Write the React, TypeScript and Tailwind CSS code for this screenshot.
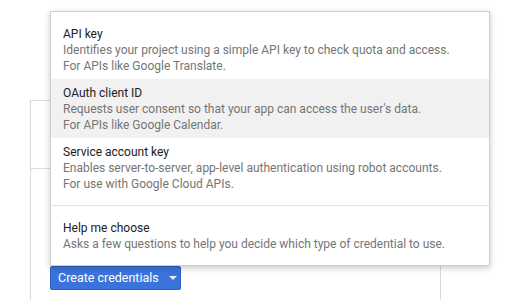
import React from "react";

type Item = { title: string; lines: string[]; active?: boolean };

const mainItems: Item[] = [
  {
    title: "API key",
    lines: [
      "Identifies your project using a simple API key to check quota and access.",
      "For APIs like Google Translate.",
    ],
  },
  {
    title: "OAuth client ID",
    lines: [
      "Requests user consent so that your app can access the user's data.",
      "For APIs like Google Calendar.",
    ],
    active: true,
  },
  {
    title: "Service account key",
    lines: [
      "Enables server-to-server, app-level authentication using robot accounts.",
      "For use with Google Cloud APIs.",
    ],
  },
];

const helpItem: Item = {
  title: "Help me choose",
  lines: ["Asks a few questions to help you decide which type of credential to use."],
};

const MenuItem = ({ title, lines, active }: Item) => (
  <div className={`pl-3 pr-3 pt-[6px] pb-[5px] whitespace-nowrap ${active ? "bg-[#f1f1f1]" : ""}`}>
    <div className="text-[12px] leading-4 text-[#212121]">{title}</div>
    {lines.map((l) => (
      <div key={l} className="text-[12px] leading-4 text-[#757575]">
        {l}
      </div>
    ))}
  </div>
);

export default function App() {
  return (
    <div
      className="w-[522px] h-[300px] overflow-hidden bg-white pl-[30px] pt-[100px]"
      style={{ fontFamily: "Roboto, 'Liberation Sans', sans-serif" }}
    >
      <div className="w-[411px] h-[260px] border border-[#dadada]">
        <div className="h-[68px] border-b border-[#dadada]" />
        <div className="pl-[19px] pt-[96px]">
          <div className="relative inline-block">
            <div className="absolute left-0 bottom-full w-[440px] border border-[#cfcfcf] bg-white shadow-[0_2px_6px_rgba(0,0,0,0.22)]">
              <div className="py-2">
                {mainItems.map((it) => (
                  <MenuItem key={it.title} {...it} />
                ))}
              </div>
              <div className="border-t border-[#e2e2e2] py-2">
                <MenuItem {...helpItem} />
              </div>
            </div>
            <button className="flex h-[24px] w-[131px] items-center whitespace-nowrap rounded-[2px] border border-[#2f62c8] bg-[#3b73dc] pl-[7px] text-[12.5px] text-white">
              <span>Create credentials</span>
              <svg width="8" height="4" viewBox="0 0 8 4" className="ml-[10px]">
                <path d="M0 0 L8 0 L4 4 Z" fill="#e8eefb" />
              </svg>
            </button>
          </div>
        </div>
      </div>
    </div>
  );
}
